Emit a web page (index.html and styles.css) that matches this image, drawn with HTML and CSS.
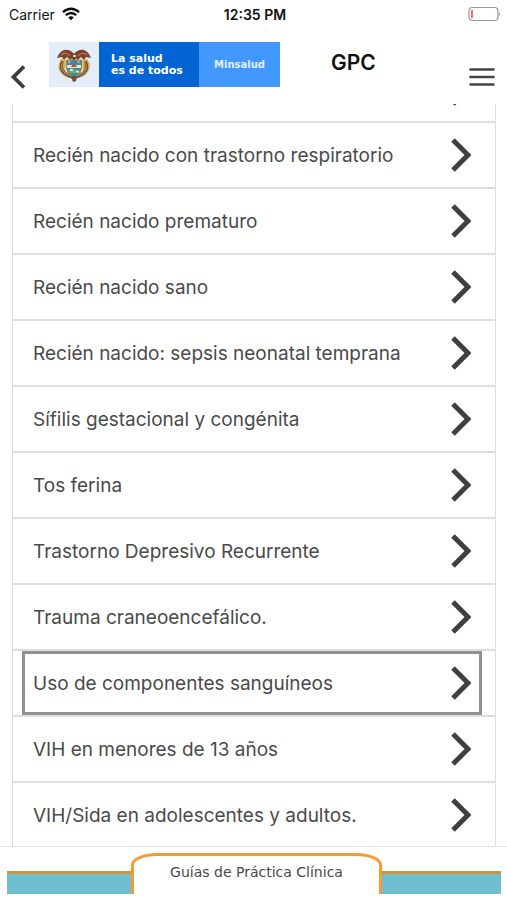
FILE: index.html
```html
<!DOCTYPE html>
<html lang="es">
<head>
<meta charset="utf-8">
<meta name="viewport" content="width=device-width, initial-scale=1">
<title>GPC</title>
<link rel="stylesheet" href="styles.css">
</head>
<body>
<div class="status">
  <div class="carrier">Carrier
    <svg width="18" height="14" viewBox="0 0 18 14" fill="none" stroke="#080808" stroke-width="2.3" aria-hidden="true"><path d="M1 5.2Q9-1.7 17 5.2M3.8 8.2Q9 3.7 14.2 8.2"/><path d="M6.2 10.3Q9 8 11.8 10.3L9 13.2Z" fill="#080808" stroke="none"/></svg>
  </div>
  <div class="time">12:35 PM</div>
  <svg class="battery" width="33" height="16" viewBox="0 0 33 16" aria-hidden="true"><rect x="1" y="1.5" width="29" height="13" rx="3.5" fill="#fff" stroke="#999" stroke-width="1.2"/><path d="M3 4h2v8H3z" fill="#f07468"/><path d="M31 6q1.800 2 0 4z" fill="#777"/></svg>
</div>
<header class="header">
  <button class="icon-button back" aria-label="Atrás"><svg width="16" height="26" viewBox="0 0 16 26" fill="none" stroke="#3c3c3c" stroke-width="3.8"><path d="M14 2.500 3.500 13 14 23.500"/></svg></button>
  <div class="logo">
    <div class="crest">
      <svg width="36" height="36" viewBox="0 0 36 36" aria-hidden="true">
        <path d="M5 12Q-1 21 6 27Q10 32 18 31Q27 32 31 26Q37 19 31 12L27 13V26H9V13Z" fill="#e2b634"/>
        <path d="M6 14Q2 21 8 27L14 30M30 14Q34 21 28 27L22 30" fill="none" stroke="#3d587d" stroke-width="1.5"/>
        <path d="M7 14Q5 22 10 26L15 28M29 14Q31 22 26 26L21 28" fill="none" stroke="#bd5136" stroke-width="1.400"/>
        <path d="M18 7Q14 2 8 3Q3 5 1 11L6 10 8 13 11 10 14 13 18 10 22 13 25 10 28 13 30 10 35 11Q33 5 28 3Q22 2 18 7Z" fill="#83432a"/>
        <path d="M5 8Q10 4 14 9M31 8Q26 4 22 9" fill="none" stroke="#b47b55" stroke-width="1.2"/>
        <path d="M10 13H26V20Q25 27 18 31Q11 27 10 20Z" fill="#438f94" stroke="#ba8b37"/>
        <path d="M11 13.500H25V17H11Z" fill="#4386ad"/><path d="M12 13l3 1.500-2 2zM24 13l-3 1.500 2 2z" fill="#e3bd56"/>
        <path d="M11 18H25V21H11Z" fill="#dce7dc"/><path d="M15 20Q18 13 21 20Z" fill="#be5144"/>
        <path d="M12 23H24L22 26H14Z" fill="#70a58d"/><path d="M14 22h3v2h-3zM20 24h3v1.500h-3z" fill="#eee6bd"/>
        <path d="M15 9Q18 4 21 9L19 13H17Z" fill="#58473a"/><path d="M17 8h3v2h-3z" fill="#ded0b5"/>
        <path d="M15 30Q18 27 21 30L20 34 17 35Z" fill="#794c36"/><path d="M13 29l3 2M23 29l-3 2" stroke="#394d76" stroke-width="1.500"/>
      </svg>
    </div>
    <div class="slogan"><span>La salud</span><span>es de todos</span></div>
    <div class="ministry">Minsalud</div>
  </div>
  <h1 class="title">GPC</h1>
  <button class="icon-button menu" aria-label="Menú"><svg width="26" height="20" viewBox="0 0 26 20" stroke="#444" stroke-width="2.600" stroke-linecap="round"><path d="M1.500 2.500h23M1.500 10h23M1.500 17.500h23"/></svg></button>
</header>
<main class="viewport">
  <ul class="list">
    <li class="row"><button class="item" aria-label="Guía anterior"><span></span><svg class="chevron" viewBox="0 0 20 34"><path d="M2 2 17 17 2 32"/></svg></button></li>
    <li class="row"><button class="item"><span>Recién nacido con trastorno respiratorio</span><svg class="chevron" viewBox="0 0 20 34"><path d="M2 2 17 17 2 32"/></svg></button></li>
    <li class="row"><button class="item"><span>Recién nacido prematuro</span><svg class="chevron" viewBox="0 0 20 34"><path d="M2 2 17 17 2 32"/></svg></button></li>
    <li class="row"><button class="item"><span>Recién nacido sano</span><svg class="chevron" viewBox="0 0 20 34"><path d="M2 2 17 17 2 32"/></svg></button></li>
    <li class="row"><button class="item"><span>Recién nacido: sepsis neonatal temprana</span><svg class="chevron" viewBox="0 0 20 34"><path d="M2 2 17 17 2 32"/></svg></button></li>
    <li class="row"><button class="item"><span>Sífilis gestacional y congénita</span><svg class="chevron" viewBox="0 0 20 34"><path d="M2 2 17 17 2 32"/></svg></button></li>
    <li class="row"><button class="item"><span>Tos ferina</span><svg class="chevron" viewBox="0 0 20 34"><path d="M2 2 17 17 2 32"/></svg></button></li>
    <li class="row"><button class="item"><span>Trastorno Depresivo Recurrente</span><svg class="chevron" viewBox="0 0 20 34"><path d="M2 2 17 17 2 32"/></svg></button></li>
    <li class="row"><button class="item"><span>Trauma craneoencefálico.</span><svg class="chevron" viewBox="0 0 20 34"><path d="M2 2 17 17 2 32"/></svg></button></li>
    <li class="row"><button class="item selected"><span>Uso de componentes sanguíneos</span><svg class="chevron" viewBox="0 0 20 34"><path d="M2 2 17 17 2 32"/></svg></button></li>
    <li class="row"><button class="item"><span>VIH en menores de 13 años</span><svg class="chevron" viewBox="0 0 20 34"><path d="M2 2 17 17 2 32"/></svg></button></li>
    <li class="row"><button class="item"><span>VIH/Sida en adolescentes y adultos.</span><svg class="chevron" viewBox="0 0 20 34"><path d="M2 2 17 17 2 32"/></svg></button></li>
  </ul>
</main>
<footer class="footer">
  <div class="band"></div>
  <div class="tab">Guías de Práctica Clínica</div>
  <div class="band"></div>
</footer>
</body>
</html>
```
FILE: styles.css
```css
* { box-sizing: border-box; }

body {
  margin: 0;
  height: 100vh;
  display: flex;
  flex-direction: column;
  overflow: hidden;
  background: #fff;
  color: #4a4a4a;
  font-family: Inter, "Liberation Sans", sans-serif;
}

button {
  font: inherit;
  color: inherit;
  background: none;
  border: 0;
  padding: 0;
}

svg { display: block; flex: none; }

.status {
  flex: none;
  height: 28px;
  padding: 0 6px 0 9px;
  display: grid;
  grid-template-columns: 1fr auto 1fr;
  align-items: center;
  color: #111;
  font-size: 14px;
}

.carrier { display: flex; align-items: center; gap: 7px; }
.time { font-weight: 600; }
.battery { justify-self: end; }

.header {
  flex: none;
  height: 76px;
  padding: 14px 12px 0 10px;
  display: flex;
  align-items: flex-start;
}

.icon-button { flex: none; }
.back { margin: 22px 23px 0 0; }
.menu { margin: 25px 0 0 auto; }

.logo {
  flex: none;
  height: 45px;
  display: flex;
  color: #fff;
  font-family: "DejaVu Sans", sans-serif;
  font-weight: 700;
}

.crest {
  width: 50px;
  display: grid;
  place-items: center;
  background: #e3edfc;
}

.slogan {
  width: 100px;
  padding-left: 12px;
  display: flex;
  flex-direction: column;
  justify-content: center;
  background: #0365d3;
  font-size: 11px;
  line-height: 12px;
}

.ministry {
  width: 81px;
  display: grid;
  place-items: center;
  background: #4398ff;
  color: #e4efff;
  font-size: 10px;
}

.title {
  margin: 8px 0 0 51px;
  color: #111;
  font-size: 21px;
  line-height: 26px;
  font-weight: 600;
}

.viewport {
  flex: 1;
  min-height: 0;
  overflow: hidden;
  margin: 0 11px 0 12px;
  border: solid #dedede;
  border-width: 0 1px;
}

.list { list-style: none; margin: -47px 0 0; padding: 0; }

.row {
  height: 66px;
  padding: 0 13px 0 9px;
  border-bottom: 2px solid #dedede;
}

.item {
  width: 100%;
  height: 64px;
  padding: 0 8px;
  border: 3px solid transparent;
  display: flex;
  align-items: center;
  justify-content: space-between;
  font-size: 19px;
  text-align: left;
}

.selected { border-color: #909090; }

.chevron {
  width: 20px;
  height: 34px;
  fill: none;
  stroke: #404040;
  stroke-width: 5;
}

.footer {
  flex: none;
  height: 54px;
  padding: 6px 6px 6px 7px;
  border-top: 1px solid #e2e2e2;
  display: grid;
  grid-template-columns: 124fr 251px 119fr;
  align-items: end;
}

.band {
  height: 23px;
  background: #70bfce;
  border-top: 3px solid #c99443;
}

.tab {
  height: 41px;
  padding-bottom: 6px;
  border: 3px solid #f59a36;
  border-bottom: 0;
  border-radius: 26px 26px 0 0 / 12px 12px 0 0;
  display: grid;
  place-items: center;
  font-family: "DejaVu Sans", sans-serif;
  font-size: 14px;
}
```
